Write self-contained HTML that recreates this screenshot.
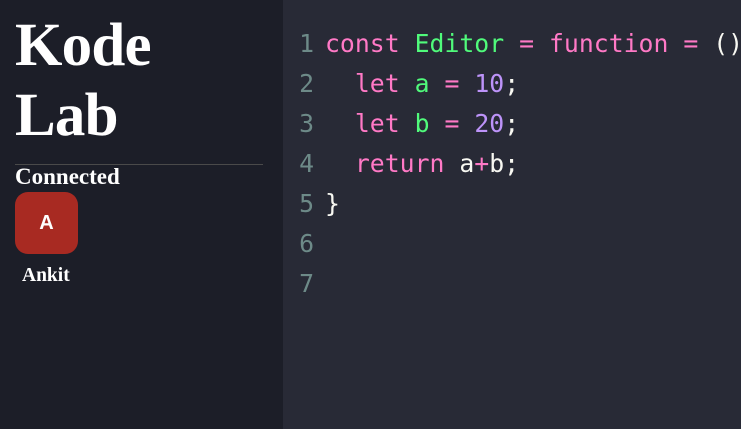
<!DOCTYPE html>
<html><head><style>
*{margin:0;padding:0;box-sizing:border-box}
body{width:741px;height:429px;overflow:hidden;background:#282a36;position:relative}
.side{position:absolute;left:0;top:0;width:283px;height:429px;background:#1c1e28}
.t{position:absolute;left:15px;font:bold 61px/70px "Liberation Serif",serif;color:#fff;letter-spacing:-0.8px}
.hr{position:absolute;left:15px;top:164px;width:248px;height:1px;background:#4a4a4a}
.con{position:absolute;left:15px;top:163px;font:bold 23px/28px "Liberation Serif",serif;color:#fff}
.av{position:absolute;left:15px;top:192px;width:63px;height:62px;border-radius:13px;background:#a82a22;color:#fff;font:bold 20px/62px "Liberation Sans",sans-serif;text-align:center}
.nm{position:absolute;left:22px;top:264px;font:bold 19.5px/24px "Liberation Serif",serif;color:#fff}
.code{position:absolute;left:283px;top:24px;font:24.8px/40px "DejaVu Sans Mono",monospace;color:#f8f8f2;white-space:pre}
.ln{display:inline-block;width:31px;text-align:right;color:#6d8a88;margin-right:11px}
.p{color:#ff79c6}.g{color:#50fa7b}.v{color:#bd93f9}
</style></head><body>
<div class="side">
<div class="t" style="top:11px">Kode</div>
<div class="t" style="top:81px">Lab</div>
<div class="hr"></div>
<div class="con">Connected</div>
<div class="av">A</div>
<div class="nm">Ankit</div>
</div>
<div class="code"><div><span class="ln">1</span><span class="p">const</span> <span class="g">Editor</span> <span class="p">=</span> <span class="p">function</span> <span class="p">=</span> ()</div><div><span class="ln">2</span>  <span class="p">let</span> <span class="g">a</span> <span class="p">=</span> <span class="v">10</span>;</div><div><span class="ln">3</span>  <span class="p">let</span> <span class="g">b</span> <span class="p">=</span> <span class="v">20</span>;</div><div><span class="ln">4</span>  <span class="p">return</span> a<span class="p">+</span>b;</div><div><span class="ln">5</span>}</div><div><span class="ln">6</span></div><div><span class="ln">7</span></div></div>
</body></html>
